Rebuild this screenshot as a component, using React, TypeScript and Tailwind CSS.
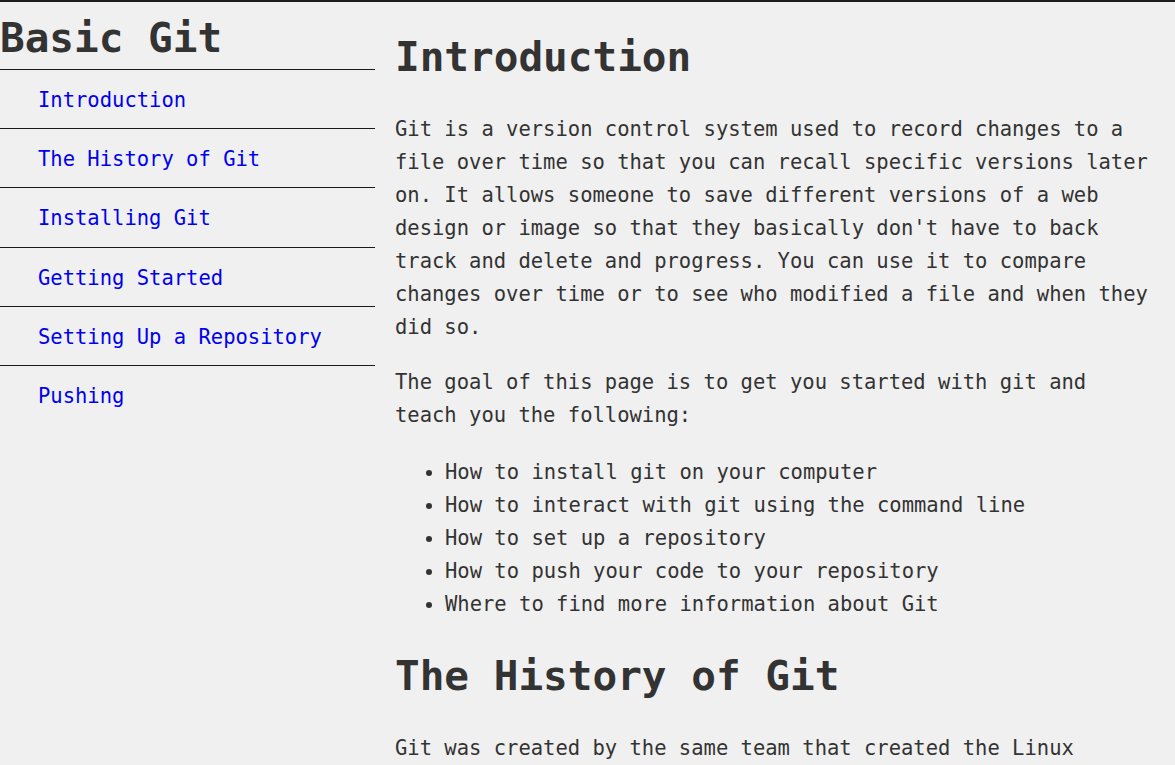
const navItems = [
  'Introduction',
  'The History of Git',
  'Installing Git',
  'Getting Started',
  'Setting Up a Repository',
  'Pushing',
];

const goals = [
  'How to install git on your computer',
  'How to interact with git using the command line',
  'How to set up a repository',
  'How to push your code to your repository',
  'Where to find more information about Git',
];

const mono = "font-['DejaVu_Sans_Mono','Liberation_Mono',monospace]";

export default function App() {
  return (
    <div className={`min-h-screen bg-[#f0f0f0] border-t-2 border-[#1e1e1e] text-[#333] ${mono} text-[20.5px] leading-[33px]`}>
      <div className="flex">
        {/* Sidebar */}
        <nav className="w-[375px] shrink-0">
          <header>
            <h1 className="pt-[12px] pb-[7px] text-[41px] leading-[48px] font-bold text-[#333]">Basic Git</h1>
          </header>
          <ul>
            {navItems.map(item => (
              <li key={item} className="border-t border-[#1a1a1a] pl-[38px] pt-[14px] pb-[11.2px]">
                <a href="#" className="text-[#0000ee]">
                  {item}
                </a>
              </li>
            ))}
          </ul>
        </nav>

        {/* Main content */}
        <main className="flex-1 pl-[20px] pr-[18px]">
          <section>
            <h2 className="mt-[31px] mb-[32.4px] text-[41px] leading-[48px] font-bold">Introduction</h2>
            <p className="mb-[22px]">
              Git is a version control system used to record changes to a file over time so that you can recall
              specific versions later on. It allows someone to save different versions of a web design or image so
              that they basically don't have to back track and delete and progress. You can use it to compare changes
              over time or to see who modified a file and when they did so.
            </p>
            <p className="mb-[24px]">The goal of this page is to get you started with git and teach you the following:</p>
            <ul className="list-disc pl-[50px] mb-[22px]">
              {goals.map(g => (
                <li key={g}>{g}</li>
              ))}
            </ul>
          </section>
          <section>
            <h2 className="mt-[30.6px] mb-[32.4px] text-[41px] leading-[48px] font-bold">The History of Git</h2>
            <p className="mb-[22px]">
              Git was created by the same team that created the Linux kernel in 2005 after the relationship between
              the Linux community and the company behind BitKeeper broke down.
            </p>
          </section>
        </main>
      </div>
    </div>
  );
}
